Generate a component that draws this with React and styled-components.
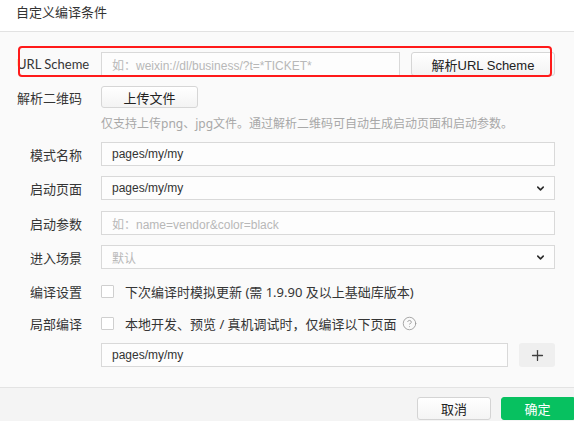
import React from "react";
import styled, { createGlobalStyle } from "styled-components";
import { ChevronDown, Plus, CircleHelp } from "lucide-react";

const Global = createGlobalStyle`
  html, body { margin: 0; padding: 0; }
  body {
    background: #fafafa;
    font-family: "Noto Sans", "Noto Sans CJK SC", sans-serif;
    color: #353535;
  }
  * { box-sizing: border-box; }
`;

const Dialog = styled.div`
  position: relative;
  width: 574px;
  height: 421px;
  overflow: hidden;
  display: flex;
  flex-direction: column;
  background: #fafafa;
`;

const Header = styled.div`
  height: 32px;
  flex: none;
  background: #ffffff;
  border-bottom: 1px solid #e2e2e2;
  padding: 3px 0 0 16px;
  font-size: 13px;
  line-height: 18px;
  color: #333;
`;

const Body = styled.div`
  flex: 1;
  padding: 0 19px 0 17px;
  display: flex;
  flex-direction: column;
`;

const Row = styled.div`
  display: grid;
  grid-template-columns: 65px 1fr;
  column-gap: 19px;
  align-items: center;
  height: ${(p) => p.$h || 24}px;
  margin-top: ${(p) => p.$mt || 10}px;
`;

const Label = styled.div`
  font-family: Lato, "Noto Sans CJK SC", sans-serif;
  font-size: 13px;
  text-align: right;
  white-space: nowrap;
  color: #353535;
`;

const Field = styled.div`
  display: flex;
  align-items: center;
  gap: ${(p) => p.$gap || 0}px;
  height: 100%;
  min-width: 0;
`;

const Input = styled.div`
  flex: 1;
  height: ${(p) => p.$h || 24}px;
  border: 1px solid #d9d9d9;
  background: #fdfdfd;
  padding: 0 8px 0 10px;
  display: flex;
  align-items: center;
  justify-content: space-between;
  font-family: "Liberation Sans", "Noto Sans CJK SC", sans-serif;
  font-size: 12px;
  color: ${(p) => (p.$placeholder ? "#b8b8b8" : "#333")};
  white-space: nowrap;
  overflow: hidden;
`;

const Button = styled.div`
  flex: none;
  width: ${(p) => p.$w}px;
  height: ${(p) => p.$h || 24}px;
  border: 1px solid #d6d6d6;
  border-radius: 3px;
  background: linear-gradient(#ffffff, #f3f3f3);
  display: flex;
  align-items: center;
  justify-content: center;
  font-family: "Liberation Sans", "Noto Sans CJK SC", sans-serif;
  font-size: 13px;
  color: #222;
`;

const IconButton = styled.div`
  flex: none;
  width: 36px;
  height: 24px;
  border-radius: 3px;
  background: #efefef;
  display: flex;
  align-items: center;
  justify-content: center;
  color: #404040;
`;

const Hint = styled.div`
  grid-column: 2;
  font-size: 12px;
  line-height: 14px;
  color: #a8a8a8;
  white-space: nowrap;
`;

const Check = styled.label`
  display: flex;
  align-items: center;
  gap: 11px;
  font-size: 13px;
  color: #353535;
  white-space: nowrap;
`;

const Box = styled.span`
  width: 13px;
  height: 13px;
  border: 1px solid #cfcfcf;
  background: #fff;
  border-radius: 1px;
  flex: none;
`;

const Help = styled.span`
  display: inline-flex;
  margin-left: 5px;
  color: #9a9a9a;
`;

const CheckText = styled.span`
  display: inline-flex;
  align-items: center;
`;

const Footer = styled.div`
  height: 34px;
  flex: none;
  border-top: 1px solid #e3e3e3;
  background: #f4f4f4;
  display: flex;
  justify-content: flex-end;
  align-items: flex-start;
  gap: 10px;
  padding-top: 9px;
`;

const FooterButton = styled.div`
  width: ${(p) => p.$w}px;
  height: 23px;
  border-radius: 3px;
  display: flex;
  align-items: center;
  justify-content: center;
  font-size: 13px;
  font-family: "Noto Sans CJK SC", sans-serif;
  ${(p) =>
    p.$primary
      ? `background: #07c160; color: #fff; border: 1px solid #07c160; border-radius: 3px 0 0 3px;`
      : `background: linear-gradient(#ffffff, #f4f4f4); color: #222; border: 1px solid #d4d4d4;`}
`;

const Highlight = styled.div`
  position: absolute;
  left: 18px;
  top: 46px;
  width: 534px;
  height: 31px;
  border: 2px solid #ff1a1a;
  border-radius: 4px;
  pointer-events: none;
`;

const Chevron = () => <ChevronDown size={11} strokeWidth={3.4} color="#2a2a2a" />;

export default function App() {
  return (
    <>
      <Global />
      <Dialog>
        <Header>自定义编译条件</Header>
        <Body>
          <Row $mt={20}>
            <Label>URL Scheme</Label>
            <Field $gap={11}>
              <Input $placeholder>如：weixin://dl/business/?t=*TICKET*</Input>
              <Button $w={144}>解析URL Scheme</Button>
            </Field>
          </Row>
          <Row $mt={10} $h={22}>
            <Label>解析二维码</Label>
            <Field>
              <Button $w={97} $h={22}>上传文件</Button>
            </Field>
          </Row>
          <Row $mt={9} $h={14}>
            <Hint>仅支持上传png、jpg文件。通过解析二维码可自动生成启动页面和启动参数。</Hint>
          </Row>
          <Row $mt={11}>
            <Label>模式名称</Label>
            <Field>
              <Input>pages/my/my</Input>
            </Field>
          </Row>
          <Row $mt={10}>
            <Label>启动页面</Label>
            <Field>
              <Input>
                pages/my/my
                <Chevron />
              </Input>
            </Field>
          </Row>
          <Row $mt={11}>
            <Label>启动参数</Label>
            <Field>
              <Input $placeholder>如：name=vendor&amp;color=black</Input>
            </Field>
          </Row>
          <Row $mt={10}>
            <Label>进入场景</Label>
            <Field>
              <Input $placeholder>
                默认
                <Chevron />
              </Input>
            </Field>
          </Row>
          <Row $mt={12} $h={20}>
            <Label>编译设置</Label>
            <Check>
              <Box />
              下次编译时模拟更新 (需 1.9.90 及以上基础库版本)
            </Check>
          </Row>
          <Row $mt={12} $h={20}>
            <Label>局部编译</Label>
            <Check>
              <Box />
              <CheckText>
                本地开发、预览 / 真机调试时，仅编译以下页面
                <Help>
                  <CircleHelp size={15} strokeWidth={1.4} />
                </Help>
              </CheckText>
            </Check>
          </Row>
          <Row $mt={10}>
            <span />
            <Field $gap={11}>
              <Input>pages/my/my</Input>
              <IconButton>
                <Plus size={17} strokeWidth={1.8} />
              </IconButton>
            </Field>
          </Row>
        </Body>
        <Footer>
          <FooterButton $w={74}>取消</FooterButton>
          <FooterButton $w={73} $primary>
            确定
          </FooterButton>
        </Footer>
        <Highlight />
      </Dialog>
    </>
  );
}
